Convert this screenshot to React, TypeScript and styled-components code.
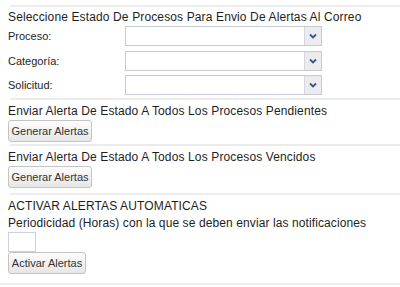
import React from "react";
import styled, { createGlobalStyle } from "styled-components";

const Global = createGlobalStyle`
  html, body { margin: 0; padding: 0; background: #fff; }
  body { font-family: Arial, "Liberation Sans", sans-serif; color: #222; }
`;

const Page = styled.div`
  width: 400px;
  height: 287px;
  display: flex;
  flex-direction: column;
  padding-top: 5px;
  box-sizing: border-box;
  overflow: hidden;
`;

const Divider = styled.div<{ $full?: boolean }>`
  height: 2px;
  background: #ececec;
  margin-left: ${(p) => (p.$full ? "0" : "10px")};
  flex-shrink: 0;
`;

const Section = styled.div<{ $top: number; $bottom: number }>`
  display: flex;
  flex-direction: column;
  align-items: flex-start;
  padding: ${(p) => p.$top}px 0 ${(p) => p.$bottom}px 8px;
`;

const Title = styled.div`
  font-size: 12px;
  line-height: 15px;
  letter-spacing: 0.13px;
  color: #1e1e1e;
  white-space: nowrap;
`;

const Form = styled.div`
  display: flex;
  flex-direction: column;
  gap: 4.5px;
  margin-top: 1px;
`;

const Row = styled.div`
  display: grid;
  grid-template-columns: 117px 197px;
  align-items: center;
  height: 20px;
`;

const Label = styled.span`
  font-size: 11px;
  color: #1e1e1e;
`;

const SelectBox = styled.div`
  height: 20px;
  box-sizing: border-box;
  border: 1px solid #c9c9d3;
  display: flex;
  justify-content: flex-end;
  background: #fff;
`;

const Arrow = styled.div`
  width: 16px;
  background: #ececf0;
  border-left: 1px solid #d6d6de;
  display: flex;
  align-items: center;
  justify-content: center;
`;

const Button = styled.button<{ $w: number; $mt?: number }>`
  width: ${(p) => p.$w}px;
  height: 22px;
  margin-top: ${(p) => p.$mt ?? 0}px;
  padding: 0;
  box-sizing: border-box;
  border: 1px solid #c4c4c4;
  border-radius: 3px;
  background: linear-gradient(#fdfdfd, #e6e6e6);
  font-family: Arial, "Liberation Sans", sans-serif;
  font-size: 11px;
  color: #333;
  cursor: pointer;
`;

const Sub = styled.div`
  font-size: 12px;
  line-height: 15px;
  letter-spacing: 0.1px;
  color: #1e1e1e;
  margin-top: 2px;
  white-space: nowrap;
`;

const SmallInput = styled.input`
  width: 28px;
  height: 20px;
  box-sizing: border-box;
  border: 1px solid #cfcfd8;
  padding: 0;
  margin-top: 1px;
`;

const Chevron = () => (
  <svg width="8" height="6" viewBox="0 0 8 6">
    <path d="M1 1.5 L4 4.5 L7 1.5" fill="none" stroke="#34568f" strokeWidth="1.8" />
  </svg>
);

const Select = () => (
  <SelectBox>
    <Arrow>
      <Chevron />
    </Arrow>
  </SelectBox>
);

export default function App() {
  return (
    <>
      <Global />
      <Page>
        <Divider />
        <Section $top={3} $bottom={3}>
          <Title>Seleccione Estado De Procesos Para Envio De Alertas Al Correo</Title>
          <Form>
            <Row>
              <Label>Proceso:</Label>
              <Select />
            </Row>
            <Row>
              <Label>Categoría:</Label>
              <Select />
            </Row>
            <Row>
              <Label>Solicitud:</Label>
              <Select />
            </Row>
          </Form>
        </Section>
        <Divider />
        <Section $top={4} $bottom={2}>
          <Title>Enviar Alerta De Estado A Todos Los Procesos Pendientes</Title>
          <Button $w={84} $mt={1}>Generar Alertas</Button>
        </Section>
        <Divider />
        <Section $top={4} $bottom={5}>
          <Title>Enviar Alerta De Estado A Todos Los Procesos Vencidos</Title>
          <Button $w={84} $mt={1}>Generar Alertas</Button>
        </Section>
        <Divider />
        <Section $top={4} $bottom={9}>
          <Title>ACTIVAR ALERTAS AUTOMATICAS</Title>
          <Sub>Periodicidad (Horas) con la que se deben enviar las notificaciones</Sub>
          <SmallInput />
          <Button $w={78}>Activar Alertas</Button>
        </Section>
        <Divider $full />
      </Page>
    </>
  );
}
